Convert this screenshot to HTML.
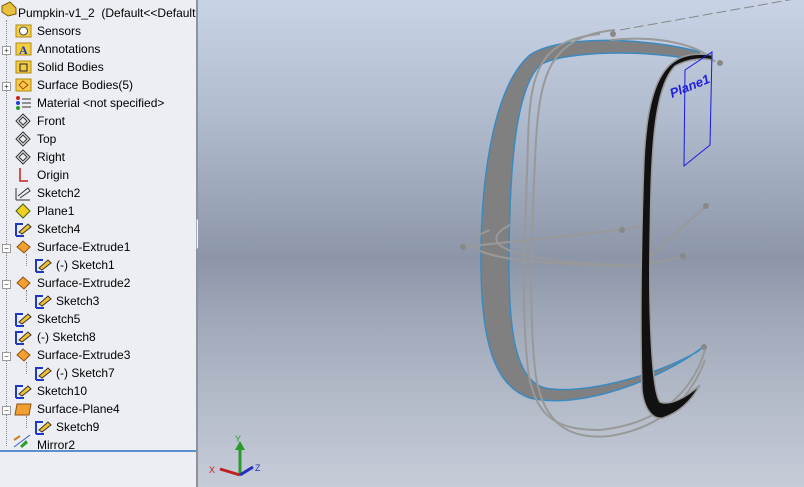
<!DOCTYPE html>
<html><head><meta charset="utf-8"><style>
body{margin:0;width:804px;height:487px;overflow:hidden;position:relative;font-family:"Liberation Sans",sans-serif;font-size:12px;color:#000}
#panel{position:absolute;left:0;top:0;width:196px;height:487px;background:#eceef3}
#sep{position:absolute;left:196px;top:0;width:2px;height:487px;background:#8d929b}
#vp{position:absolute;left:198px;top:0;width:606px;height:487px;background:linear-gradient(#c9d3e6 0%,#b0bacd 25%,#8c96a8 53%,#a6aebe 70%,#c6ccd8 100%)}
.r{position:absolute;height:18px;line-height:18px;white-space:nowrap}
.dot{position:absolute;border-left:1px dotted #888}
.pm{position:absolute;width:7px;height:7px;border:1px solid #999;background:#fff;font-size:8px;line-height:7px;text-align:center;color:#333}
</style></head><body>
<div id="panel">
<div class="dot" style="left:6px;top:20px;height:426px"></div>
<div class="dot" style="left:26px;top:254px;height:12px"></div>
<div class="dot" style="left:26px;top:290px;height:12px"></div>
<div class="dot" style="left:26px;top:362px;height:12px"></div>
<div class="dot" style="left:26px;top:416px;height:12px"></div>
<div style="position:absolute;left:0;top:450px;width:196px;height:2px;background:#5b8fd0"></div>
<svg width="196" height="460" style="position:absolute;left:0;top:0">
<path d="M2 6 L10 2 L16 8 L16 14 L8 16 L2 12Z" fill="#e8c040" stroke="#7a5a00"/>
<g stroke="#b08a10" fill="#f5cd45">
<rect x="16" y="25" width="15" height="12"/><rect x="16" y="43" width="15" height="12"/><rect x="16" y="61" width="15" height="12"/><rect x="16" y="79" width="15" height="12"/>
</g>
<circle cx="23.5" cy="31" r="4" fill="#fff" stroke="#345"/>
<text x="19" y="54" font-size="12" font-weight="bold" fill="#1a3cb0" font-family="Liberation Serif">A</text>
<rect x="20" y="64" width="7" height="7" fill="none" stroke="#222"/>
<path d="M19 85 L23 81 L28 85 L23 89Z" fill="none" stroke="#c04010"/>
<circle cx="18" cy="98" r="2" fill="#d02020"/><circle cx="18" cy="103" r="2" fill="#2040d0"/><circle cx="18" cy="108" r="2" fill="#20a020"/>
<path d="M22 99h9M22 103h9M22 107h9" stroke="#333"/>
<g fill="none" stroke="#333">
<path d="M16 121 L23 114 L30 121 L23 128Z M19 121 L23 117 L27 121 L23 125Z"/>
<path d="M16 139 L23 132 L30 139 L23 146Z M19 139 L23 135 L27 139 L23 143Z"/>
<path d="M16 157 L23 150 L30 157 L23 164Z M19 157 L23 153 L27 157 L23 161Z"/>
</g>
<path d="M20 168 V181 H28" stroke="#c02020" fill="none" stroke-width="1.5"/>
<path d="M16 200 L16 188 M16 200 H30 M18 196 L28 188 L30 191 L20 198" stroke="#333" fill="none"/>
<path d="M16 211 L23 204 L30 211 L23 218Z" fill="#f0d020" stroke="#406010"/>
<g id="sk">
<path d="M16 236 V224 H23 M16 236 H24" stroke="#1f3ac0" fill="none" stroke-width="2"/>
<path d="M19 232 L28 224 L31 227 L22 234Z" fill="#f3c030" stroke="#333"/>
</g>
<g fill="#f0a030" stroke="#905010">
<path d="M17 247 L23 241 L30 247 L24 253Z"/>
<path d="M17 283 L23 277 L30 283 L24 289Z"/>
<path d="M17 355 L23 349 L30 355 L24 361Z"/>
<path d="M17 404 H31 L29 415 H15Z"/>
</g>
<use href="#sk" x="20" y="36"/><use href="#sk" x="20" y="72"/><use href="#sk" y="90"/><use href="#sk" y="108"/><use href="#sk" x="20" y="144"/><use href="#sk" y="162"/><use href="#sk" x="20" y="198"/>
<path d="M14 447 L30 435" stroke="#3060c0"/><path d="M20 446 L26 440 L28 443 L22 448Z" fill="#30a030"/><path d="M14 440 L20 436" stroke="#d08020" stroke-width="2"/>
</svg>
<div class="pm" style="left:2px;top:46px">+</div>
<div class="pm" style="left:2px;top:82px">+</div>
<div class="pm" style="left:2px;top:244px">−</div>
<div class="pm" style="left:2px;top:280px">−</div>
<div class="pm" style="left:2px;top:352px">−</div>
<div class="pm" style="left:2px;top:406px">−</div>
<div class="r" style="left:18px;top:4px">Pumpkin-v1_2 &nbsp;(Default&lt;&lt;Default</div>
<div class="r" style="left:37px;top:22px">Sensors</div>
<div class="r" style="left:37px;top:40px">Annotations</div>
<div class="r" style="left:37px;top:58px">Solid Bodies</div>
<div class="r" style="left:37px;top:76px">Surface Bodies(5)</div>
<div class="r" style="left:37px;top:94px">Material &lt;not specified&gt;</div>
<div class="r" style="left:37px;top:112px">Front</div>
<div class="r" style="left:37px;top:130px">Top</div>
<div class="r" style="left:37px;top:148px">Right</div>
<div class="r" style="left:37px;top:166px">Origin</div>
<div class="r" style="left:37px;top:184px">Sketch2</div>
<div class="r" style="left:37px;top:202px">Plane1</div>
<div class="r" style="left:37px;top:220px">Sketch4</div>
<div class="r" style="left:37px;top:238px">Surface-Extrude1</div>
<div class="r" style="left:56px;top:256px">(-) Sketch1</div>
<div class="r" style="left:37px;top:274px">Surface-Extrude2</div>
<div class="r" style="left:56px;top:292px">Sketch3</div>
<div class="r" style="left:37px;top:310px">Sketch5</div>
<div class="r" style="left:37px;top:328px">(-) Sketch8</div>
<div class="r" style="left:37px;top:346px">Surface-Extrude3</div>
<div class="r" style="left:56px;top:364px">(-) Sketch7</div>
<div class="r" style="left:37px;top:382px">Sketch10</div>
<div class="r" style="left:37px;top:400px">Surface-Plane4</div>
<div class="r" style="left:56px;top:418px">Sketch9</div>
<div class="r" style="left:37px;top:436px">Mirror2</div>
</div>
<div id="sep"></div>
<div style="position:absolute;left:196px;top:219px;width:10px;height:28px;background:#f4f5f8;border:1px solid #aab"></div>
<div style="position:absolute;left:200px;top:222px;font-size:7px;line-height:7px;color:#446">◀<br>◀<br>◀</div>
<div id="vp"></div>
<svg width="804" height="487" style="position:absolute;left:0;top:0">
<path d="M620 30 L800 -2" stroke="#888" stroke-dasharray="10 4" fill="none"/>
<path d="M700 52 C650 38 560 34 530 55 C495 85 482 170 481 250 C480 330 490 385 530 398 C580 410 660 380 703 347 L697 352 C650 378 580 395 545 388 C515 380 508 330 509 250 C510 170 515 90 540 65 C565 50 650 50 695 60 Z" fill="#808080" stroke="#3a8ac0" stroke-width="1.5"/>
<g fill="none" stroke="#999" stroke-width="2">
<path d="M600 34 C540 40 530 70 528 140 C526 220 520 300 528 370 C535 420 560 430 600 430 C650 425 690 400 705 350"/>
<path d="M615 30 C550 36 540 75 536 140 C532 220 528 300 535 370 C542 425 570 440 610 436 C660 428 690 400 705 360"/>
<path d="M610 40 C660 35 700 45 715 62"/>
<path d="M490 230 C450 245 470 265 640 266 L685 256"/>
<path d="M510 225 C480 240 490 262 640 266"/>
<path d="M463 247 L620 230 L650 225"/>
<path d="M640 266 L706 206"/>
</g>
<g fill="#888"><circle cx="613" cy="34" r="3"/><circle cx="720" cy="63" r="3"/><circle cx="622" cy="230" r="3"/><circle cx="706" cy="206" r="3"/><circle cx="463" cy="247" r="3"/><circle cx="683" cy="256" r="3"/><circle cx="704" cy="347" r="3"/></g>
<path d="M712 55 C665 48 648 80 644 160 C641 240 640 320 642 390 C644 408 652 420 663 418 C680 412 692 400 700 385 C685 398 670 406 660 402 C652 392 649 320 650 250 C651 160 652 90 675 66 C690 58 705 58 712 60Z" fill="#111" stroke="#999" stroke-width="1.5"/>
<path d="M685 70 L712 52 L710 145 L684 166 Z" fill="none" stroke="#1a1ae0"/>
<text x="672" y="98" font-size="13" font-weight="bold" font-style="italic" fill="#2020e0" transform="rotate(-22 672 98)">Plane1</text>
<path d="M240 475 V448" stroke="#2a9a2a" stroke-width="3"/><path d="M235 450 L240 441 L245 450Z" fill="#2a9a2a"/>
<path d="M240 475 L220 469" stroke="#c02020" stroke-width="3"/><path d="M240 475 L253 467" stroke="#2030c0" stroke-width="3"/>
<text x="235" y="442" font-size="9" fill="#2a9a2a">Y</text><text x="209" y="473" font-size="9" fill="#c02020">X</text><text x="255" y="471" font-size="9" fill="#2030c0">Z</text>
</svg>
</body></html>
